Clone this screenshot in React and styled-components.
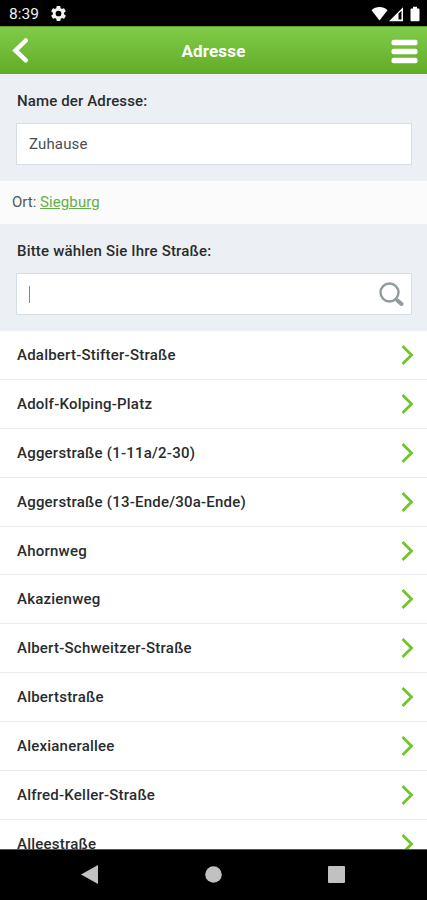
// App.jsx
import React, { useState } from "react";
import styled, { createGlobalStyle } from "styled-components";

const GlobalStyle = createGlobalStyle`
  * {
    box-sizing: border-box;
  }

  body {
    margin: 0;
    background: #000;
    font-family: Roboto, "Liberation Sans", sans-serif;
  }
`;

const Screen = styled.div`
  display: flex;
  flex-direction: column;
  width: 100%;
  height: 900px;
  overflow: hidden;
  background: #fff;
  color: #292c2e;
`;

const StatusBar = styled.div`
  display: flex;
  flex: none;
  align-items: center;
  height: 26px;
  padding: 1px 7px 0 9px;
  background: #000;
  color: #f2f2f2;
`;

const Clock = styled.span`
  width: 42px;
  font-size: 15.5px;
  line-height: 24px;
`;

const StatusIcons = styled.div`
  display: flex;
  align-items: center;
  margin-left: auto;
`;

const Header = styled.header`
  display: grid;
  grid-template-columns: 48px 1fr 48px;
  flex: none;
  align-items: center;
  height: 48px;
  background: linear-gradient(#80cc49, #62ab27);
  border-top: 1px solid #5f9f31;
  color: #fff;
`;

const Title = styled.h1`
  margin: 0;
  font-size: 17px;
  font-weight: 700;
  line-height: 46px;
  letter-spacing: 0.15px;
  text-align: center;
`;

const HeaderButton = styled.button`
  display: flex;
  justify-content: ${(props) => (props.$end ? "flex-end" : "flex-start")};
  padding: ${(props) => (props.$end ? "1px 9px 0 0" : "0 0 0 12px")};
  border: 0;
  background: none;
  color: inherit;
`;

const FormSection = styled.section`
  flex: none;
  height: 107px;
  padding: 17px 15px 0 16px;
  background: #ecf0f4;
`;

const Label = styled.label`
  display: block;
  height: 20px;
  padding-left: 1px;
  font-size: 15px;
  font-weight: 500;
  line-height: 20px;
  letter-spacing: ${(props) => props.$spacing || "0.13px"};
`;

const Field = styled.div`
  display: flex;
  align-items: center;
  height: 42px;
  margin-top: 12px;
  padding: 0 7px 0 12px;
  border: 1px solid #d5dde5;
  background: #fff;
`;

const Input = styled.input`
  flex: 1;
  min-width: 0;
  padding: 0;
  border: 0;
  outline: 0;
  background: none;
  color: #4a4d4f;
  font-family: inherit;
  font-size: 15px;
  letter-spacing: 0.15px;
`;

const Caret = styled.span`
  width: 1px;
  height: 17px;
  background: #888;
`;

const Place = styled.div`
  flex: none;
  height: 43px;
  padding-left: 12px;
  background: #fafbfa;
  color: #55585a;
  font-size: 15px;
  line-height: 42px;
`;

const PlaceLink = styled.a`
  color: #65ad4a;
  letter-spacing: 0.1px;
  text-decoration: underline;
`;

const StreetList = styled.ul`
  flex: 1;
  min-height: 0;
  margin: 0;
  padding: 0;
  overflow: hidden;
  list-style: none;
`;

const StreetRow = styled.li`
  display: flex;
  align-items: center;
  justify-content: space-between;
  height: 48.9px;
  padding: 0 13px 0 17px;
  border-bottom: 1px solid #e9ecec;
  font-size: 15px;
  font-weight: 500;
  letter-spacing: 0.22px;
`;

const NavBar = styled.nav`
  display: flex;
  flex: none;
  align-items: center;
  justify-content: space-between;
  height: 51px;
  padding: 0 82px 1px 81px;
  border-top: 1px solid #555;
  background: #000;
`;

const streets = [
  "Adalbert-Stifter-Straße",
  "Adolf-Kolping-Platz",
  "Aggerstraße (1-11a/2-30)",
  "Aggerstraße (13-Ende/30a-Ende)",
  "Ahornweg",
  "Akazienweg",
  "Albert-Schweitzer-Straße",
  "Albertstraße",
  "Alexianerallee",
  "Alfred-Keller-Straße",
  "Alleestraße",
];

const GearIcon = () => (
  <svg width="15" height="15" viewBox="2 2 20 20" fill="currentColor">
    <path
      fillRule="evenodd"
      d="M19.4 13a7.5 7.5 0 0 0 0-2l2.1-1.6a.5.5 0 0 0 .1-.7l-2-3.4a.5.5 0 0 0-.6-.2l-2.5 1a7.3 7.3 0 0 0-1.7-1l-.4-2.6a.5.5 0 0 0-.5-.5h-4a.5.5 0 0 0-.5.5L9.1 5.1a7.3 7.3 0 0 0-1.7 1L5 5.1a.5.5 0 0 0-.6.2l-2 3.4a.5.5 0 0 0 .1.7L4.6 11a7.5 7.5 0 0 0 0 2l-2.1 1.6a.5.5 0 0 0-.1.7l2 3.4a.5.5 0 0 0 .6.2l2.4-1a7.3 7.3 0 0 0 1.7 1l.4 2.6a.5.5 0 0 0 .5.5h4a.5.5 0 0 0 .5-.5l.4-2.6a7.3 7.3 0 0 0 1.7-1l2.5 1a.5.5 0 0 0 .6-.2l2-3.4a.5.5 0 0 0-.1-.7zM12 15.8a3.8 3.8 0 1 1 0-7.6 3.8 3.8 0 0 1 0 7.6z"
    />
  </svg>
);

// wifi, mobile signal and battery share one drawing
const ConnectionIcons = () => (
  <svg width="49" height="16" viewBox="0 0 49 16" fill="#fff">
    <path d="M0.500 4.200C5-.1 12-.1 16.500 4.200L8.500 14.500z" />
    <path fillRule="evenodd" d="M18 15.200L32 1.200v14zM27.500 7.500v6h3V4.700z" />
    <path d="M39.500 3.500a1 1 0 0 1 1-1H42V.8h4v1.700h1.500a1 1 0 0 1 1 1v10.700a1 1 0 0 1-1 1h-7a1 1 0 0 1-1-1z" />
  </svg>
);

const BackIcon = () => (
  <svg width="17" height="27" viewBox="0 0 17 27" fill="none">
    <path d="M13.800 3.500L3.500 13.500l10.300 9.800" stroke="#fff" strokeWidth="4.500" strokeLinecap="round" />
  </svg>
);

const MenuIcon = () => (
  <svg width="27" height="25" viewBox="0 0 27 25" fill="#fff">
    <rect x="0.500" y="0.700" width="26" height="5.500" rx="2" />
    <rect x="0.500" y="9.700" width="26" height="5.500" rx="2" />
    <rect x="0.500" y="18.700" width="26" height="5.500" rx="2" />
  </svg>
);

const SearchIcon = () => (
  <svg width="25" height="25" viewBox="0 0 25 25" fill="none" stroke="#929b9b">
    <circle cx="10.500" cy="10.500" r="9" strokeWidth="2.400" />
    <path d="M16.500 16.500l3 3" strokeWidth="3" />
    <path d="M18.800 18.800l3.700 3.200" strokeWidth="4" strokeLinecap="round" />
  </svg>
);

const ChevronIcon = () => (
  <svg width="13" height="20" viewBox="0 0 13 20" fill="none">
    <path d="M1.500 1l9 9-9 9" stroke="#70c52b" strokeWidth="2.800" />
  </svg>
);

const App = () => {
  const [name, setName] = useState("Zuhause");

  return (
    <Screen>
      <GlobalStyle />
      <StatusBar>
        <Clock>8:39</Clock>
        <GearIcon />
        <StatusIcons>
          <ConnectionIcons />
        </StatusIcons>
      </StatusBar>
      <Header>
        <HeaderButton aria-label="Zurück">
          <BackIcon />
        </HeaderButton>
        <Title>Adresse</Title>
        <HeaderButton $end aria-label="Menü">
          <MenuIcon />
        </HeaderButton>
      </Header>
      <FormSection>
        <Label htmlFor="name">Name der Adresse:</Label>
        <Field>
          <Input id="name" value={name} onChange={(e) => setName(e.target.value)} />
        </Field>
      </FormSection>
      <Place>
        Ort: <PlaceLink>Siegburg</PlaceLink>
      </Place>
      <FormSection>
        <Label htmlFor="street" $spacing="0.18px">
          Bitte wählen Sie Ihre Straße:
        </Label>
        <Field>
          <Caret />
          <Input id="street" />
          <SearchIcon />
        </Field>
      </FormSection>
      <StreetList>
        {streets.map((street) => (
          <StreetRow key={street}>
            {street}
            <ChevronIcon />
          </StreetRow>
        ))}
      </StreetList>
      <NavBar>
        <svg width="17" height="19" viewBox="0 0 17 19" fill="#c1c1c1">
          <path d="M17 0v19L0 9.500z" />
        </svg>
        <svg width="17" height="17" viewBox="0 0 17 17" fill="#c1c1c1">
          <circle cx="8.500" cy="8.500" r="8.300" />
        </svg>
        <svg width="17" height="17" viewBox="0 0 17 17" fill="#c1c1c1">
          <rect width="17" height="17" rx="1" />
        </svg>
      </NavBar>
    </Screen>
  );
};

export default App;
